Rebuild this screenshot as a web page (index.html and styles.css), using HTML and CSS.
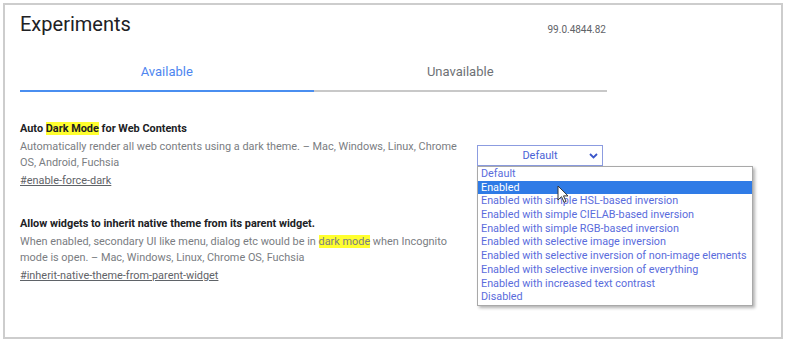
FILE: index.html
```html
<!DOCTYPE html>
<html lang="en">
<head>
  <meta charset="UTF-8">
  <meta name="viewport" content="width=device-width, initial-scale=1.0">
  <title>Experiments</title>
  <link rel="stylesheet" href="styles.css">
</head>
<body>
  <div class="frame">
    <div class="page">
      <!-- Header -->
      <div class="header">
        <h1>Experiments</h1>
        <span class="version">99.0.4844.82</span>
      </div>

      <!-- Tabs -->
      <div class="tabs">
        <div class="tab active">Available</div>
        <div class="tab">Unavailable</div>
      </div>

      <!-- Experiment 1 -->
      <div class="experiment">
        <div class="exp-text">
          <h3>Auto <mark>Dark Mode</mark> for Web Contents</h3>
          <p>Automatically render all web contents using a dark theme. – Mac, Windows, Linux, Chrome OS, Android, Fuchsia</p>
          <a href="#">#enable-force-dark</a>
        </div>
        <div class="exp-control">
          <div class="select">
            Default
            <svg class="chevron" width="9" height="6" viewBox="0 0 9 6"><path d="M1 1l3.5 3.5L8 1" fill="none" stroke="#3b56c9" stroke-width="1.8"/></svg>
          </div>
          <ul class="dropdown">
            <li>Default</li>
            <li class="selected">Enabled</li>
            <li>Enabled with simple HSL-based inversion</li>
            <li>Enabled with simple CIELAB-based inversion</li>
            <li>Enabled with simple RGB-based inversion</li>
            <li>Enabled with selective image inversion</li>
            <li>Enabled with selective inversion of non-image elements</li>
            <li>Enabled with selective inversion of everything</li>
            <li>Enabled with increased text contrast</li>
            <li>Disabled</li>
          </ul>
          <svg class="cursor" width="12" height="18" viewBox="0 0 12 18"><path d="M1 1v14l3.5-3.3 2.6 5.6 2-0.9-2.6-5.5H11z" fill="#fff" stroke="#333" stroke-width="1"/></svg>
        </div>
      </div>

      <!-- Experiment 2 -->
      <div class="experiment">
        <div class="exp-text">
          <h3>Allow widgets to inherit native theme from its parent widget.</h3>
          <p>When enabled, secondary UI like menu, dialog etc would be in <mark>dark mode</mark> when Incognito mode is open. – Mac, Windows, Linux, Chrome OS, Fuchsia</p>
          <a href="#">#inherit-native-theme-from-parent-widget</a>
        </div>
      </div>
    </div>
  </div>
</body>
</html>
```

FILE: styles.css
```css
body {
  margin: 0;
  background: #fff;
  font-family: Roboto, "Liberation Sans", sans-serif;
}

.frame {
  margin: 3px 0 0 3px;
  width: 776px;
  height: 332px;
  border: 2px solid #cdcdcd;
}

.page {
  width: 587px;
  padding-left: 15px;
}

.header {
  display: flex;
  justify-content: space-between;
  align-items: center;
  height: 37px;
}

.header h1 {
  margin: 0;
  font-size: 20px;
  font-weight: 400;
  color: #202124;
}

.version {
  align-self: flex-end;
  font-size: 10px;
  line-height: 12px;
  color: #5f6368;
  margin: 0 1px 6px 0;
}

.tabs {
  display: flex;
  margin-top: 11px;
}

.tab {
  flex: 1;
  text-align: center;
  font-size: 13px;
  line-height: 15px;
  color: #6e7175;
  padding: 11px 0 11px;
  border-bottom: 2px solid #c8c8c8;
}

.tab.active {
  color: #4d86f0;
  border-bottom-color: #4a8ef0;
}

.experiment {
  display: flex;
  justify-content: space-between;
  margin-top: 29px;
}

.experiment + .experiment {
  margin-top: 27px;
}

.exp-text {
  width: 445px;
  font-size: 10.9px;
  line-height: 16px;
}

.exp-text h3 {
  margin: 0 0 2px;
  font-size: 10.9px;
  font-weight: 700;
  color: #202124;
}

.exp-text p {
  margin: 0 0 2px;
  color: #7a7d82;
}

.exp-text a {
  color: #5f6368;
  text-decoration: underline;
}

mark {
  background: #ffff2e;
  color: inherit;
}

.exp-control {
  position: relative;
  padding-top: 24px;
}

.select {
  position: relative;
  width: 124px;
  height: 19px;
  border: 1px solid #8c9ce0;
  font-size: 11px;
  line-height: 19px;
  text-align: center;
  color: #4a63d6;
  margin-right: 4px;
}

.chevron {
  position: absolute;
  right: 4px;
  top: 7px;
}

.dropdown {
  position: absolute;
  top: 45px;
  left: 0;
  width: 274px;
  margin: 0;
  padding: 0 0 1px;
  list-style: none;
  background: #fff;
  border: 1px solid #a9a9a9;
  box-shadow: 2px 2px 3px rgba(0, 0, 0, 0.3);
  font-size: 10.8px;
  color: #5a6cdc;
  z-index: 2;
}

.dropdown li {
  height: 13.7px;
  line-height: 13.7px;
  padding-left: 3px;
  white-space: nowrap;
}

.dropdown li.selected {
  background: #2f7be6;
  color: #fff;
}

.cursor {
  position: absolute;
  left: 80px;
  top: 64px;
  z-index: 3;
}
```
